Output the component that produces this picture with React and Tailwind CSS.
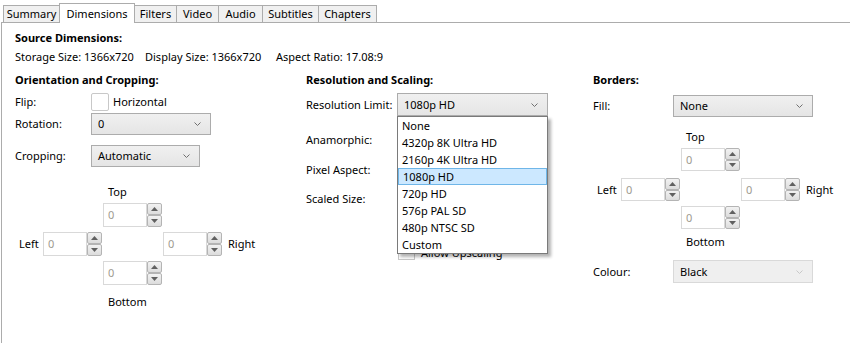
const tabs = [
  { name: 'Summary', w: 'w-[57px]' },
  { name: 'Dimensions', w: 'w-[76px]', active: true },
  { name: 'Filters', w: 'w-[43px]' },
  { name: 'Video', w: 'w-[43px]' },
  { name: 'Audio', w: 'w-[45px]' },
  { name: 'Subtitles', w: 'w-[57px]' },
  { name: 'Chapters', w: 'w-[59px]' },
];

const limits = ['None', '4320p 8K Ultra HD', '2160p 4K Ultra HD', '1080p HD', '720p HD', '576p PAL SD', '480p NTSC SD', 'Custom'];

const Chevron = ({ light }) => (
  <svg width="7" height="5" viewBox="0 0 7 5" className="absolute right-[9px] top-1/2 -translate-y-1/2">
    <polyline points="0.5,1 3.5,4 6.5,1" fill="none" stroke={light ? '#c8c8c8' : '#707070'} strokeWidth="1" />
  </svg>
);

const Select = ({ value, w, h = 'h-[22px]', disabled }) => (
  <div
    className={`relative ${w} ${h} flex items-center pl-[6px] border ${
      disabled ? 'border-[#d9d9d9] bg-[#efefef]' : 'border-[#acacac] bg-gradient-to-b from-[#f0f0f0] to-[#e5e5e5]'
    }`}
  >
    {value}
    <Chevron light={disabled} />
  </div>
);

const Arrow = ({ up }) => (
  <svg width="7" height="4" viewBox="0 0 7 4">
    <polygon points={up ? '0,4 3.5,0 7,4' : '0,0 3.5,4 7,0'} fill="#606060" />
  </svg>
);

const Spinner = ({ h = 'h-[24px]' }) => (
  <div className={`flex ${h}`}>
    <div className="w-[44px] h-full border border-[#d9d9d9] bg-white flex items-center pl-[4px] text-[#a09a90]">0</div>
    <div className="w-[15px] h-full flex flex-col">
      <div className="flex-1 border border-[#b4b4b4] rounded-[2px] bg-gradient-to-b from-[#f2f2f2] to-[#dcdcdc] flex items-center justify-center">
        <Arrow up />
      </div>
      <div className="flex-1 border border-[#b4b4b4] rounded-[2px] bg-gradient-to-b from-[#f2f2f2] to-[#dcdcdc] flex items-center justify-center">
        <Arrow />
      </div>
    </div>
  </div>
);

const Checkbox = () => <div className="w-[18px] h-[18px] border border-[#c8c8c8] rounded-[2px] bg-white" />;

// h: spinner height class, gap: margin class above the middle row
const CropGrid = ({ h, gap }) => (
  <div>
    <div className="h-4 flex items-center ml-[93px]">Top</div>
    <div className={`mt-[3px] ml-[88px] ${h}`}>
      <Spinner h={h} />
    </div>
    <div className={`${gap} flex items-center ${h}`}>
      <div className="w-[28px] pl-[4px]">Left</div>
      <Spinner h={h} />
      <div className="w-[61px]" />
      <Spinner h={h} />
      <span className="ml-[6px]">Right</span>
    </div>
    <div className={`mt-[5px] ml-[88px] ${h}`}>
      <Spinner h={h} />
    </div>
  </div>
);

export default function App() {
  return (
    <div className="w-[850px] h-[343px] overflow-hidden bg-white text-black text-[11px] leading-4 font-['Noto_Sans','Liberation_Sans',sans-serif]">
      <div className="flex items-end h-[22px] pl-[3px]">
        {tabs.map((t, i) => (
          <div
            key={t.name}
            className={`${t.w} ${i > 0 ? '-ml-px' : ''} flex items-center justify-center border border-b-0 border-[#acacac] ${
              t.active ? 'h-[20px] -mb-px relative z-10 bg-white' : 'h-[17px] bg-[#f0f0f0]'
            }`}
          >
            {t.name}
          </div>
        ))}
      </div>

      <div className="ml-px h-[321px] border-l border-t border-[#acacac] pl-[13px] pt-[7px]">
        <div className="h-4 font-bold">Source Dimensions:</div>
        <div className="mt-[3px] h-4 flex">
          <span className="w-[130px]">Storage Size: 1366x720</span>
          <span className="w-[131px]">Display Size: 1366x720</span>
          <span>Aspect Ratio: 17.08:9</span>
        </div>

        <div className="mt-[7px] flex">
          {/* Orientation and Cropping */}
          <div className="w-[291px]">
            <div className="h-4 font-bold">Orientation and Cropping:</div>
            <div className="mt-[4px] h-[19px] flex items-center">
              <div className="w-[76px]">Flip:</div>
              <Checkbox />
              <span className="ml-[4px]">Horizontal</span>
            </div>
            <div className="mt-[2px] flex items-center">
              <div className="w-[76px]">Rotation:</div>
              <Select value="0" w="w-[120px]" />
            </div>
            <div className="mt-[10px] flex items-center">
              <div className="w-[76px]">Cropping:</div>
              <Select value="Automatic" w="w-[109px]" />
            </div>
            <div className="mt-[17px]">
              <CropGrid h="h-[24px]" gap="mt-[5px]" />
            </div>
            <div className="mt-[9px] h-4 ml-[93px]">Bottom</div>
          </div>

          {/* Resolution and Scaling */}
          <div className="w-[287px] relative">
            <div className="h-4 font-bold">Resolution and Scaling:</div>
            <div className="mt-[5px] flex items-center">
              <div className="w-[91px]">Resolution Limit:</div>
              <Select value="1080p HD" w="w-[151px]" h="h-[23px]" />
            </div>
            <div className="mt-[16px] h-4">Anamorphic:</div>
            <div className="mt-[14px] h-4">Pixel Aspect:</div>
            <div className="mt-[13px] h-4">Scaled Size:</div>
            <div className="mt-[34px] ml-[92px] flex items-center">
              <div className="w-[17px] h-[17px] border border-[#c8c8c8] bg-white" />
              <span className="ml-[6px] mt-[4px]">Allow Upscaling</span>
            </div>

            <div className="absolute left-[91px] top-[44px] w-[151px] border border-[#7a7a7a] bg-white shadow-[3px_3px_3px_rgba(0,0,0,0.3)] z-20">
              {limits.map((l) => (
                <div
                  key={l}
                  className={`h-[17px] flex items-center pl-[4px] ${
                    l === '1080p HD' ? 'bg-[#cce8ff] border border-[#6fb6e8] pl-[3px]' : ''
                  }`}
                >
                  {l}
                </div>
              ))}
            </div>
          </div>

          {/* Borders */}
          <div className="flex-1">
            <div className="h-4 font-bold">Borders:</div>
            <div className="mt-[7px] flex items-center">
              <div className="w-[80px]">Fill:</div>
              <Select value="None" w="w-[140px]" />
            </div>
            <div className="mt-[12px]">
              <CropGrid h="h-[23px]" gap="mt-[7px]" />
            </div>
            <div className="mt-[5px] h-4 ml-[93px]">Bottom</div>
            <div className="mt-[10px] flex items-center">
              <div className="w-[80px]">Colour:</div>
              <Select value="Black" w="w-[140px]" h="h-[23px]" disabled />
            </div>
          </div>
        </div>
      </div>
    </div>
  );
}
